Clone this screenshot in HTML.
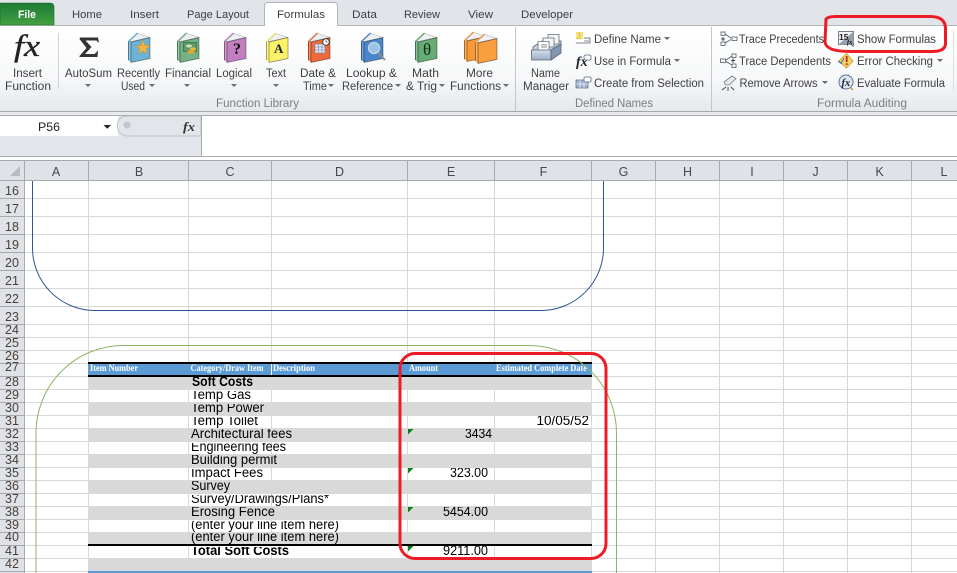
<!DOCTYPE html>
<html><head><meta charset="utf-8"><style>
html,body{margin:0;padding:0;background:#fff;width:957px;height:573px;overflow:hidden}
svg{display:block}
text{font-family:"Liberation Sans",sans-serif}
.t{font-size:11.5px;fill:#3f4042}
.g{font-size:11.5px;fill:#7b7e84}
.tb{font-size:11px;fill:#3b3e42}
.c{font-size:12.5px;fill:#444a50;text-anchor:middle}
.r{font-size:12.5px;fill:#4a4038;text-anchor:middle}
.d{font-size:13.5px;fill:#000}
.b{font-size:13.5px;fill:#000;font-weight:bold}
.n{font-size:13.5px;fill:#000;text-anchor:end}
.h{font-family:"Liberation Serif",serif;font-weight:bold;font-size:9px;fill:#fff}
</style></head><body>
<svg width="957" height="573" viewBox="0 0 957 573" xmlns="http://www.w3.org/2000/svg">
<defs>
<linearGradient id="rib" x1="0" y1="0" x2="0" y2="1"><stop offset="0" stop-color="#fff"/><stop offset=".6" stop-color="#f7f8f9"/><stop offset="1" stop-color="#e6e8eb"/></linearGradient>
<linearGradient id="file" x1="0" y1="0" x2="0" y2="1"><stop offset="0" stop-color="#1f7a33"/><stop offset=".55" stop-color="#2f8f3e"/><stop offset="1" stop-color="#46a040"/></linearGradient>
<linearGradient id="box" x1="0" y1="0" x2="0" y2="1"><stop offset="0" stop-color="#d5deec"/><stop offset="1" stop-color="#9dadc6"/></linearGradient>
<g id="bk">
<path d="M0 9L9 0.5L11 2L3 9.5V30L0 28Z" fill="currentColor"/>
<path d="M2 9L10 1.5L22 5.5L3.500 9.500Z" fill="#eef0f2" stroke="#a4a8ac" stroke-width=".5"/>
<path d="M3 10L22 5.500V26.500L3 30.500Z" fill="currentColor"/>
<path d="M3 10L22 5.500V26.500L3 30.500ZM0.500 9.500V28" fill="none" stroke="#000" stroke-opacity=".38" stroke-width=".9"/>
<path d="M1.800 10V28.500" stroke="#fff" stroke-opacity=".45" stroke-width=".8" fill="none"/>
</g>
</defs>

<rect width="957" height="26" fill="#e1e4e8"/>
<rect y="26" width="957" height="85" fill="url(#rib)"/>
<rect y="25" width="957" height="1" fill="#b4b7bb"/>
<rect y="111" width="957" height="1" fill="#a4a7ab"/>
<rect y="112" width="957" height="3" fill="#e8eaed"/>
<rect y="115" width="957" height="1" fill="#a6a9ae"/>
<path d="M0 3H50Q54 3 54 7V25H0Z" fill="url(#file)" stroke="#1d6a2d" stroke-width=".6"/>
<text x="18" y="18" textLength="18" lengthAdjust="spacingAndGlyphs" style="font-size:11px;font-weight:bold;fill:#fff">File</text>
<path d="M264.500 26V6Q264.500 2.500 268 2.500H334Q337.500 2.500 337.500 6V26" fill="#fff" stroke="#b2b5b9"/>
<rect x="265" y="25" width="72" height="2" fill="#fff"/>
<text class="tb" x="72" y="18" textLength="30" lengthAdjust="spacingAndGlyphs">Home</text>
<text class="tb" x="130" y="18" textLength="29" lengthAdjust="spacingAndGlyphs">Insert</text>
<text class="tb" x="187" y="18" textLength="62" lengthAdjust="spacingAndGlyphs">Page Layout</text>
<text class="tb" x="277" y="18" textLength="48" lengthAdjust="spacingAndGlyphs">Formulas</text>
<text class="tb" x="352" y="18" textLength="25" lengthAdjust="spacingAndGlyphs">Data</text>
<text class="tb" x="404" y="18" textLength="36" lengthAdjust="spacingAndGlyphs">Review</text>
<text class="tb" x="468" y="18" textLength="25" lengthAdjust="spacingAndGlyphs">View</text>
<text class="tb" x="521" y="18" textLength="52" lengthAdjust="spacingAndGlyphs">Developer</text>

<g shape-rendering="crispEdges">
<rect x="58" y="33" width="1" height="56" fill="#d2d4d7"/>
<rect x="515" y="27" width="1" height="84" fill="#c4c7ca"/>
<rect x="711" y="27" width="1" height="84" fill="#c4c7ca"/>
<rect x="953" y="30" width="1" height="60" fill="#dcdee1"/>
</g>

<text x="14" y="56" textLength="26" lengthAdjust="spacingAndGlyphs" style="font-family:'Liberation Serif',serif;font-style:italic;font-size:31px;fill:#222;stroke:#222;stroke-width:.35">fx</text>
<path d="M80 37.500H98L99 43L96.500 40.500H85.500L91.500 47L85 54H94.500L98 50.500L97.500 57H79.500V56L86.500 48L79.500 39Z" fill="#333"/>

<use href="#bk" x="128" y="32" style="color:#6fb2d8"/>
<path d="M143 40L145 45.500H150.500L146 48.800L147.700 54L143 50.800L138.300 54L140 48.800L135.500 45.500H141Z" fill="#f2b544" stroke="#c98a20" stroke-width=".5"/>

<use href="#bk" x="177" y="32" style="color:#74b184"/>
<rect x="183.500" y="42.500" width="13" height="9" fill="#5d9a6c" stroke="#2d6a3e" stroke-width=".7"/>
<ellipse cx="193" cy="49" rx="3.200" ry="1.600" fill="#e7b73f"/><ellipse cx="191" cy="52" rx="4" ry="1.700" fill="#e0a62e"/><ellipse cx="189" cy="46" rx="3" ry="1.500" fill="#d9dfb9"/>

<use href="#bk" x="224" y="32" style="color:#c27fc0"/>
<text x="233" y="54" style="font-family:'Liberation Serif',serif;font-weight:bold;font-size:16px;fill:#111">?</text>

<use href="#bk" x="266" y="32" style="color:#fbf26a"/>
<text x="274" y="53" style="font-family:'Liberation Serif',serif;font-weight:bold;font-size:13px;fill:#222">A</text>

<use href="#bk" x="308" y="32" style="color:#ee6a3a"/>
<rect x="315" y="44" width="10" height="9" fill="#dfe7f4" stroke="#6b7fa0" stroke-width=".5"/>
<path d="M315 47H325M315 50H325M318.500 44V53M322 44V53" stroke="#6b7fa0" stroke-width=".5"/>
<circle cx="326" cy="42" r="3.300" fill="#fff" stroke="#333" stroke-width=".9"/><path d="M326 40V42H328" stroke="#333" stroke-width=".6" fill="none"/>

<use href="#bk" x="361" y="32" style="color:#4a86cc"/>
<circle cx="374" cy="48" r="5.500" fill="#a9cdec" fill-opacity=".85" stroke="#c7d7e6" stroke-width="1.300"/>
<path d="M378 52.500L385 60" stroke="#8b8f94" stroke-width="2"/>

<use href="#bk" x="415" y="32" style="color:#66ac74"/>
<text x="423" y="55" style="font-family:'Liberation Serif',serif;font-size:17px;fill:#142a18">θ</text>

<use href="#bk" x="464" y="31" style="color:#f79a38"/>
<use href="#bk" x="475" y="33" style="color:#f99f3f"/>

<path d="M533 47L542 41H561V47L551 53H533Z" fill="#c9d2df" stroke="#55647c" stroke-width=".8"/>
<path d="M548 34.500H559V44H548Z" fill="#f3f4f6" stroke="#66707e" stroke-width=".8"/>
<path d="M543 38H554V47H543Z" fill="#f3f4f6" stroke="#66707e" stroke-width=".8"/>
<path d="M538 41.500H549V50.500H538Z" fill="#fff" stroke="#66707e" stroke-width=".8"/>
<path d="M541 45H547M541 47H547" stroke="#666c74" stroke-width=".8"/>
<path d="M531.500 50H551V60H531.500Z" fill="url(#box)" stroke="#55647c" stroke-width=".8"/>
<path d="M551 50L561 44V53L551 60Z" fill="#8496b0" stroke="#55647c" stroke-width=".8"/>

<rect x="576" y="32" width="7" height="7" fill="#f3e27b"/>
<path d="M577 38.500L581.500 38.500M579.500 32V37" stroke="#d8b520" stroke-width=".7"/>
<path d="M576 43H590V38H584" fill="#fff" stroke="#55606e" stroke-width=".8"/>
<path d="M584 41H589" stroke="#55606e" stroke-width=".7"/>
<text x="576" y="66" style="font-family:'Liberation Serif',serif;font-style:italic;font-weight:bold;font-size:14px;fill:#222">fx</text>
<rect x="584" y="55" width="7" height="5" rx="1.500" fill="#fff" stroke="#5a6a80" stroke-width=".8"/>
<rect x="576" y="80" width="12" height="8" fill="#9fb3cf" stroke="#5a6a80" stroke-width=".7"/>
<path d="M580 80V88M584 80V88M576 84H588" stroke="#eef2f7" stroke-width=".7"/>
<rect x="584" y="77" width="7" height="5" rx="1" fill="#fff" stroke="#5a6a80" stroke-width=".8"/>

<g fill="#fff" stroke="#4f5a68" stroke-width=".8">
<rect x="721" y="32" width="4" height="3.500"/><rect x="721" y="42" width="4" height="3.500"/><rect x="732" y="37" width="5" height="3.500"/>
<rect x="732" y="54" width="4" height="3.500"/><rect x="732" y="64" width="4" height="3.500"/><rect x="720.500" y="59" width="5" height="3.500"/>
<path d="M725 34L731 38M725 43L731 39.500M726 60L732 56M726 61.500L732 65" fill="none"/>
<path d="M723 37V41M721 39H725M733 58.500V63M731 60.500H735" fill="none" stroke="#222"/>
</g>
<path d="M724 82L732 76L736 78.500L729 85L725.500 85Z" fill="#e6e8ec" stroke="#747c88" stroke-width=".8"/>
<path d="M722 90L726 87M728 91V87M734 90L731 87" stroke="#39424e" stroke-width=".9" fill="none"/>

<rect x="838.500" y="31.500" width="15" height="13" fill="#f4f5f6" stroke="#3d4a5c" stroke-width=".7"/>
<path d="M838.500 44.500L853.500 31.500V44.500Z" fill="#98a2ae"/>
<text x="839" y="40" style="font-size:8.500px;font-weight:bold;fill:#222">15</text>
<text x="847" y="44" style="font-family:'Liberation Serif',serif;font-style:italic;font-size:6.500px;font-weight:bold;fill:#111">fx</text>
<path d="M851 44.500L854 46.500" stroke="#3058a0" stroke-width="1"/>
<path d="M846.500 53.500L853 61L846.500 68L839 61Z" fill="#f5d361" stroke="#c69a26" stroke-width=".8"/>
<rect x="845.800" y="56" width="1.800" height="6" fill="#c42a1a"/><rect x="845.800" y="63.300" width="1.800" height="1.800" fill="#c42a1a"/>
<path d="M838 61L841 63.500L844 58" stroke="#3a6fc0" stroke-width="1" fill="none"/>
<circle cx="846" cy="82" r="7" fill="#dce7f5" stroke="#5c7093" stroke-width="1"/>
<text x="841.500" y="86" style="font-family:'Liberation Serif',serif;font-style:italic;font-weight:bold;font-size:10.500px;fill:#222">fx</text>
<path d="M850.500 87.500L853 90" stroke="#c79a30" stroke-width="1.400"/>

<text class="t" x="13" y="77" textLength="29" lengthAdjust="spacingAndGlyphs">Insert</text>
<text class="t" x="5" y="90" textLength="46" lengthAdjust="spacingAndGlyphs">Function</text>
<text class="t" x="65" y="77" textLength="47" lengthAdjust="spacingAndGlyphs">AutoSum</text>
<text class="t" x="117" y="77" textLength="43" lengthAdjust="spacingAndGlyphs">Recently</text>
<text class="t" x="121" y="90" textLength="24" lengthAdjust="spacingAndGlyphs">Used</text>
<text class="t" x="165" y="77" textLength="46" lengthAdjust="spacingAndGlyphs">Financial</text>
<text class="t" x="216" y="77" textLength="36" lengthAdjust="spacingAndGlyphs">Logical</text>
<text class="t" x="266" y="77" textLength="20" lengthAdjust="spacingAndGlyphs">Text</text>
<text class="t" x="300" y="77" textLength="36" lengthAdjust="spacingAndGlyphs">Date &amp;</text>
<text class="t" x="303" y="90" textLength="24" lengthAdjust="spacingAndGlyphs">Time</text>
<text class="t" x="346" y="77" textLength="51" lengthAdjust="spacingAndGlyphs">Lookup &amp;</text>
<text class="t" x="342" y="90" textLength="51" lengthAdjust="spacingAndGlyphs">Reference</text>
<text class="t" x="412" y="77" textLength="27" lengthAdjust="spacingAndGlyphs">Math</text>
<text class="t" x="406" y="90" textLength="31" lengthAdjust="spacingAndGlyphs">&amp; Trig</text>
<text class="t" x="466" y="77" textLength="27" lengthAdjust="spacingAndGlyphs">More</text>
<text class="t" x="450" y="90" textLength="51" lengthAdjust="spacingAndGlyphs">Functions</text>
<text class="t" x="531" y="77" textLength="29" lengthAdjust="spacingAndGlyphs">Name</text>
<text class="t" x="523" y="90" textLength="46" lengthAdjust="spacingAndGlyphs">Manager</text>
<text class="t" x="594" y="43" textLength="67" lengthAdjust="spacingAndGlyphs">Define Name</text>
<text class="t" x="594" y="65" textLength="77" lengthAdjust="spacingAndGlyphs">Use in Formula</text>
<text class="t" x="594" y="87" textLength="110" lengthAdjust="spacingAndGlyphs">Create from Selection</text>
<text class="t" x="739" y="43" textLength="85" lengthAdjust="spacingAndGlyphs">Trace Precedents</text>
<text class="t" x="739" y="65" textLength="92" lengthAdjust="spacingAndGlyphs">Trace Dependents</text>
<text class="t" x="739.500" y="87" textLength="78" lengthAdjust="spacingAndGlyphs">Remove Arrows</text>
<text class="t" x="857" y="43" textLength="79" lengthAdjust="spacingAndGlyphs">Show Formulas</text>
<text class="t" x="857" y="65" textLength="76" lengthAdjust="spacingAndGlyphs">Error Checking</text>
<text class="t" x="857" y="87" textLength="88" lengthAdjust="spacingAndGlyphs">Evaluate Formula</text>
<text class="g" x="216" y="107" textLength="83" lengthAdjust="spacingAndGlyphs">Function Library</text>
<text class="g" x="575" y="107" textLength="78" lengthAdjust="spacingAndGlyphs">Defined Names</text>
<text class="g" x="817" y="107" textLength="90" lengthAdjust="spacingAndGlyphs">Formula Auditing</text>
<path d="M85 84h6l-3 3zM149 84h6l-3 3zM184 84h6l-3 3zM231 84h6l-3 3zM273 84h6l-3 3zM328 84h6l-3 3zM395 84h6l-3 3zM439 84h6l-3 3zM503 84h6l-3 3zM664 37h6l-3 3zM674 59h6l-3 3zM822 81h6l-3 3zM937 59h6l-3 3z" fill="#6a6d72"/>

<rect y="116" width="202" height="40" fill="#e2e5e9"/>
<rect y="116" width="118" height="20" fill="#fff"/>
<path d="M127 116Q117 117 117.500 126Q118 135 127 136H201V116Z" fill="#e2e5e9" stroke="#b4b7bb" stroke-width=".7"/>
<circle cx="127" cy="125" r="3.500" fill="#c3c6ca"/>
<rect x="201" y="116" width="1" height="41" fill="#a6a9ae"/>
<text x="38" y="131" textLength="22" lengthAdjust="spacingAndGlyphs" style="font-size:12px;fill:#222">P56</text>
<path d="M103.500 125h7.500l-3.700 3.800z" fill="#222"/>
<text x="183" y="131" textLength="12" lengthAdjust="spacingAndGlyphs" style="font-family:'Liberation Serif',serif;font-style:italic;font-weight:bold;font-size:13px;fill:#333">fx</text>
<rect y="156" width="957" height="1" fill="#a6a9ae"/>
<rect y="160" width="957" height="1" fill="#a6a9ae"/>

<rect y="161" width="957" height="19" fill="#dfe2e6"/>
<rect y="180" width="957" height="1" fill="#a6a9ae"/>
<path d="M20 166V176H10Z" fill="#b8bbbf"/>
<g fill="#a6a9ae" shape-rendering="crispEdges">
<rect x="24" y="161" width="1" height="19"/><rect x="88" y="161" width="1" height="19"/><rect x="188" y="161" width="1" height="19"/><rect x="271" y="161" width="1" height="19"/><rect x="407" y="161" width="1" height="19"/><rect x="494" y="161" width="1" height="19"/><rect x="591" y="161" width="1" height="19"/><rect x="655" y="161" width="1" height="19"/><rect x="719" y="161" width="1" height="19"/><rect x="783" y="161" width="1" height="19"/><rect x="847" y="161" width="1" height="19"/><rect x="911" y="161" width="1" height="19"/>
</g>
<text class="c" x="56" y="176">A</text><text class="c" x="139" y="176">B</text><text class="c" x="230" y="176">C</text><text class="c" x="339.500" y="176">D</text><text class="c" x="451" y="176">E</text><text class="c" x="543.500" y="176">F</text><text class="c" x="623.500" y="176">G</text><text class="c" x="687.500" y="176">H</text><text class="c" x="752" y="176">I</text><text class="c" x="815.500" y="176">J</text><text class="c" x="879.500" y="176">K</text><text class="c" x="944" y="176">L</text>

<rect y="181" width="24" height="392" fill="#dfe2e6"/>
<rect x="24" y="181" width="1" height="392" fill="#a6a9ae"/>

<g fill="#d8d8d8" shape-rendering="crispEdges">
<rect x="88" y="181" width="1" height="392"/><rect x="188" y="181" width="1" height="392"/><rect x="271" y="181" width="1" height="392"/><rect x="407" y="181" width="1" height="392"/><rect x="494" y="181" width="1" height="392"/><rect x="591" y="181" width="1" height="392"/><rect x="655" y="181" width="1" height="392"/><rect x="719" y="181" width="1" height="392"/><rect x="783" y="181" width="1" height="392"/><rect x="847" y="181" width="1" height="392"/><rect x="911" y="181" width="1" height="392"/>
<rect x="25" y="198" width="932" height="1"/><rect x="25" y="216" width="932" height="1"/><rect x="25" y="234" width="932" height="1"/><rect x="25" y="252" width="932" height="1"/><rect x="25" y="270" width="932" height="1"/><rect x="25" y="288" width="932" height="1"/><rect x="25" y="306" width="932" height="1"/><rect x="25" y="324" width="932" height="1"/><rect x="25" y="337" width="932" height="1"/><rect x="25" y="350" width="932" height="1"/><rect x="25" y="363" width="932" height="1"/><rect x="25" y="376" width="932" height="1"/><rect x="25" y="389" width="932" height="1"/><rect x="25" y="402" width="932" height="1"/><rect x="25" y="415" width="932" height="1"/><rect x="25" y="428" width="932" height="1"/><rect x="25" y="441" width="932" height="1"/><rect x="25" y="454" width="932" height="1"/><rect x="25" y="467" width="932" height="1"/><rect x="25" y="480" width="932" height="1"/><rect x="25" y="493" width="932" height="1"/><rect x="25" y="506" width="932" height="1"/><rect x="25" y="519" width="932" height="1"/><rect x="25" y="532" width="932" height="1"/><rect x="25" y="545" width="932" height="1"/><rect x="25" y="558" width="932" height="1"/><rect x="25" y="571" width="932" height="1"/>
</g>
<g fill="#a6a9ae" shape-rendering="crispEdges">
<rect y="198" width="24" height="1"/><rect y="216" width="24" height="1"/><rect y="234" width="24" height="1"/><rect y="252" width="24" height="1"/><rect y="270" width="24" height="1"/><rect y="288" width="24" height="1"/><rect y="306" width="24" height="1"/><rect y="324" width="24" height="1"/><rect y="337" width="24" height="1"/><rect y="350" width="24" height="1"/><rect y="363" width="24" height="1"/><rect y="376" width="24" height="1"/><rect y="389" width="24" height="1"/><rect y="402" width="24" height="1"/><rect y="415" width="24" height="1"/><rect y="428" width="24" height="1"/><rect y="441" width="24" height="1"/><rect y="454" width="24" height="1"/><rect y="467" width="24" height="1"/><rect y="480" width="24" height="1"/><rect y="493" width="24" height="1"/><rect y="506" width="24" height="1"/><rect y="519" width="24" height="1"/><rect y="532" width="24" height="1"/><rect y="545" width="24" height="1"/><rect y="558" width="24" height="1"/><rect y="571" width="24" height="1"/>
</g>
<text class="r" x="12" y="195">16</text><text class="r" x="12" y="213">17</text><text class="r" x="12" y="231">18</text><text class="r" x="12" y="249">19</text><text class="r" x="12" y="267">20</text><text class="r" x="12" y="285">21</text><text class="r" x="12" y="303">22</text><text class="r" x="12" y="321">23</text><text class="r" x="12" y="334">24</text><text class="r" x="12" y="347">25</text><text class="r" x="12" y="360">26</text><text class="r" x="12" y="371">27</text><text class="r" x="12" y="386">28</text><text class="r" x="12" y="399">29</text><text class="r" x="12" y="412">30</text><text class="r" x="12" y="425">31</text><text class="r" x="12" y="438">32</text><text class="r" x="12" y="451">33</text><text class="r" x="12" y="464">34</text><text class="r" x="12" y="477">35</text><text class="r" x="12" y="490">36</text><text class="r" x="12" y="503">37</text><text class="r" x="12" y="516">38</text><text class="r" x="12" y="529">39</text><text class="r" x="12" y="541">40</text><text class="r" x="12" y="555">41</text><text class="r" x="12" y="568">42</text>

<g fill="#d9d9d9" shape-rendering="crispEdges">
<rect x="88" y="376" width="504" height="14"/><rect x="88" y="402" width="504" height="14"/><rect x="88" y="428" width="504" height="14"/><rect x="88" y="454" width="504" height="14"/><rect x="88" y="480" width="504" height="14"/><rect x="88" y="506" width="504" height="14"/><rect x="88" y="532" width="504" height="13"/><rect x="88" y="558" width="504" height="13"/>
</g>
<g shape-rendering="crispEdges">
<rect x="88" y="364" width="504" height="11" fill="#5b9bd5"/>
<rect x="88" y="362" width="504" height="2" fill="#000"/>
<rect x="88" y="375" width="504" height="2" fill="#000"/>
<rect x="271" y="364" width="1" height="11" fill="#fff"/>
<rect x="88" y="544" width="504" height="2" fill="#000"/>
<rect x="88" y="571" width="504" height="2" fill="#5b9bd5"/>
</g>
<text class="h" x="90" y="371" textLength="48" lengthAdjust="spacingAndGlyphs">Item Number</text>
<text class="h" x="190.500" y="371" textLength="73" lengthAdjust="spacingAndGlyphs">Category/Draw Item</text>
<text class="h" x="273" y="371" textLength="42" lengthAdjust="spacingAndGlyphs">Description</text>
<text class="h" x="409" y="371" textLength="29" lengthAdjust="spacingAndGlyphs">Amount</text>
<text class="h" x="496" y="371" textLength="91" lengthAdjust="spacingAndGlyphs">Estimated Complete Date</text>

<svg x="189" y="377" width="218" height="13"><text class="b" x="3" y="9" textLength="61" lengthAdjust="spacingAndGlyphs">Soft Costs</text></svg>
<svg x="189" y="391" width="218" height="11"><text class="d" x="2" y="8" textLength="60" lengthAdjust="spacingAndGlyphs">Temp Gas</text></svg>
<svg x="189" y="404" width="218" height="12"><text class="d" x="2" y="8" textLength="73" lengthAdjust="spacingAndGlyphs">Temp Power</text></svg>
<svg x="189" y="417" width="218" height="11"><text class="d" x="2" y="8" textLength="67" lengthAdjust="spacingAndGlyphs">Temp Toilet</text></svg>
<svg x="189" y="429" width="218" height="13"><text class="d" x="2" y="9" textLength="101" lengthAdjust="spacingAndGlyphs">Architectural fees</text></svg>
<svg x="189" y="443" width="218" height="11"><text class="d" x="2" y="8" textLength="95" lengthAdjust="spacingAndGlyphs">Engineering fees</text></svg>
<svg x="189" y="455" width="218" height="13"><text class="d" x="2" y="9" textLength="86" lengthAdjust="spacingAndGlyphs">Building permit</text></svg>
<svg x="189" y="469" width="218" height="11"><text class="d" x="2" y="8" textLength="72" lengthAdjust="spacingAndGlyphs">Impact Fees</text></svg>
<svg x="189" y="481" width="218" height="13"><text class="d" x="2" y="9" textLength="39" lengthAdjust="spacingAndGlyphs">Survey</text></svg>
<svg x="189" y="495" width="218" height="11"><text class="d" x="2" y="8" textLength="138" lengthAdjust="spacingAndGlyphs">Survey/Drawings/Plans*</text></svg>
<svg x="189" y="507" width="218" height="13"><text class="d" x="2" y="9" textLength="84" lengthAdjust="spacingAndGlyphs">Erosing Fence</text></svg>
<svg x="189" y="521" width="218" height="11"><text class="d" x="2" y="8" textLength="148" lengthAdjust="spacingAndGlyphs">(enter your line item here)</text></svg>
<svg x="189" y="533" width="218" height="11"><text class="d" x="2" y="8" textLength="148" lengthAdjust="spacingAndGlyphs">(enter your line item here)</text></svg>
<svg x="189" y="547" width="218" height="11"><text class="b" x="2" y="8" textLength="98" lengthAdjust="spacingAndGlyphs">Total Soft Costs</text></svg>

<svg x="495" y="416" width="97" height="12"><text class="n" x="94" y="9">10/05/52</text></svg>
<svg x="408" y="429" width="87" height="13"><text class="n" x="84" y="9" textLength="27" lengthAdjust="spacingAndGlyphs">3434</text></svg>
<svg x="408" y="468" width="87" height="12"><text class="n" x="80" y="9" textLength="38" lengthAdjust="spacingAndGlyphs">323.00</text></svg>
<svg x="408" y="507" width="87" height="13"><text class="n" x="80" y="9" textLength="45" lengthAdjust="spacingAndGlyphs">5454.00</text></svg>
<svg x="408" y="546" width="87" height="12"><text class="n" x="80" y="9" textLength="45" lengthAdjust="spacingAndGlyphs">9211.00</text></svg>
<path d="M408 429h5.500l-5.500 5.500zM408 468h5.500l-5.500 5.500zM408 507h5.500l-5.500 5.500zM408 546h5.500l-5.500 5.500z" fill="#0b7f17"/>

<path d="M32.500 181V248A62.500 62.500 0 0 0 95 310.500H541A62.500 62.500 0 0 0 603.500 248V181" fill="none" stroke="#2f5597" stroke-width="1"/>
<path d="M36 573V433A87.500 87.500 0 0 1 123.500 345.500H529A87.500 87.500 0 0 1 616.500 433V573" fill="none" stroke="#8bb661" stroke-width="1"/>
<rect x="400" y="353.500" width="206" height="205" rx="15" ry="15" fill="none" stroke="#ed1c24" stroke-width="3"/>
<path d="M826 19Q828 16.500 836 16.500L930 16.500Q945 16.500 945.500 28L945.500 44Q945 51.500 932 51.500L850 51.500Q826 51.500 825 42Z" fill="none" stroke="#ed1c24" stroke-width="3"/>
</svg>
</body></html>
